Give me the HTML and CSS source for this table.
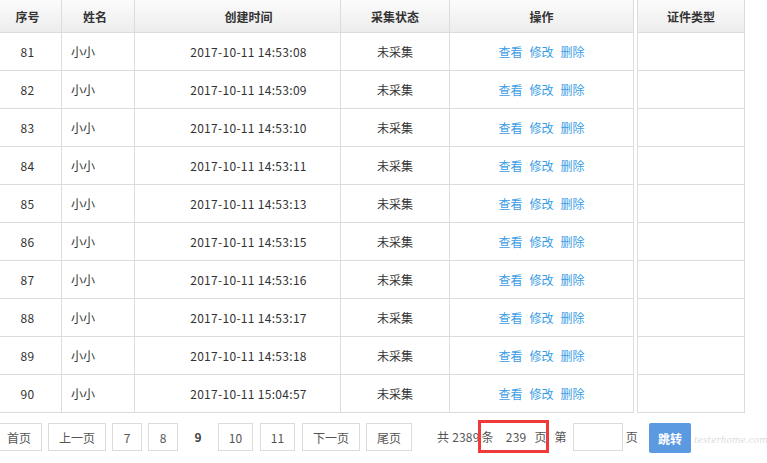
FILE: index.html
```html
<!DOCTYPE html>
<html lang="zh-CN">
<head>
<meta charset="utf-8">
<title>列表</title>
<link rel="stylesheet" href="styles.css">
</head>
<body>
<div class="tables">
  <div class="grid main">
    <div class="th c1">序号</div><div class="th c2">姓名</div><div class="th c3">创建时间</div><div class="th">采集状态</div><div class="th">操作</div>
    <div class="td c1 num">81</div><div class="td name">小小</div><div class="td c3 num">2017-10-11 14:53:08</div><div class="td">未采集</div><div class="td ops"><a>查看</a><a>修改</a><a>删除</a></div>
    <div class="td c1 num">82</div><div class="td name">小小</div><div class="td c3 num">2017-10-11 14:53:09</div><div class="td">未采集</div><div class="td ops"><a>查看</a><a>修改</a><a>删除</a></div>
    <div class="td c1 num">83</div><div class="td name">小小</div><div class="td c3 num">2017-10-11 14:53:10</div><div class="td">未采集</div><div class="td ops"><a>查看</a><a>修改</a><a>删除</a></div>
    <div class="td c1 num">84</div><div class="td name">小小</div><div class="td c3 num">2017-10-11 14:53:11</div><div class="td">未采集</div><div class="td ops"><a>查看</a><a>修改</a><a>删除</a></div>
    <div class="td c1 num">85</div><div class="td name">小小</div><div class="td c3 num">2017-10-11 14:53:13</div><div class="td">未采集</div><div class="td ops"><a>查看</a><a>修改</a><a>删除</a></div>
    <div class="td c1 num">86</div><div class="td name">小小</div><div class="td c3 num">2017-10-11 14:53:15</div><div class="td">未采集</div><div class="td ops"><a>查看</a><a>修改</a><a>删除</a></div>
    <div class="td c1 num">87</div><div class="td name">小小</div><div class="td c3 num">2017-10-11 14:53:16</div><div class="td">未采集</div><div class="td ops"><a>查看</a><a>修改</a><a>删除</a></div>
    <div class="td c1 num">88</div><div class="td name">小小</div><div class="td c3 num">2017-10-11 14:53:17</div><div class="td">未采集</div><div class="td ops"><a>查看</a><a>修改</a><a>删除</a></div>
    <div class="td c1 num">89</div><div class="td name">小小</div><div class="td c3 num">2017-10-11 14:53:18</div><div class="td">未采集</div><div class="td ops"><a>查看</a><a>修改</a><a>删除</a></div>
    <div class="td c1 num">90</div><div class="td name">小小</div><div class="td c3 num">2017-10-11 15:04:57</div><div class="td">未采集</div><div class="td ops"><a>查看</a><a>修改</a><a>删除</a></div>
  </div>
  <div class="grid fixed">
    <div class="th">证件类型</div>
    <div class="td"></div><div class="td"></div><div class="td"></div><div class="td"></div><div class="td"></div>
    <div class="td"></div><div class="td"></div><div class="td"></div><div class="td"></div><div class="td"></div>
  </div>
</div>
<div class="pager">
  <span class="btn first">首页</span>
  <span class="btn">上一页</span>
  <span class="btn num">7</span>
  <span class="btn num">8</span>
  <span class="cur">9</span>
  <span class="btn num2">10</span>
  <span class="btn num2">11</span>
  <span class="btn">下一页</span>
  <span class="btn">尾页</span>
  <span class="info total">共 2389</span>
  <span class="info tiao">条</span>
  <span class="info pages">239</span>
  <span class="info ye">页</span>
  <span class="info di">第</span>
  <span class="jump-input"></span>
  <span class="info ye2">页</span>
  <span class="go">跳转</span>
  <span class="mark"></span>
  <span class="watermark">testerhome.com</span>
</div>
</body>
</html>
```
FILE: styles.css
```css
html, body {
  margin: 0;
  padding: 0;
  background: #fff;
}
body {
  font-family: "Noto Sans CJK SC", "Microsoft YaHei", sans-serif;
  font-size: 12px;
  color: #333;
  width: 767px;
  height: 463px;
  overflow: hidden;
  position: relative;
}
.tables {
  display: flex;
  gap: 3px;
}
.grid {
  display: grid;
}
.main {
  grid-template-columns: 62px 73px 206px 109px 184px;
}
.fixed {
  grid-template-columns: 108px;
  border-left: 1px solid #dcdcdc;
}
.th, .td {
  box-sizing: border-box;
  border-right: 1px solid #dcdcdc;
  border-bottom: 1px solid #dcdcdc;
  display: flex;
  align-items: center;
  justify-content: center;
  white-space: nowrap;
}
.c1, .c2 {
  padding-right: 6px;
}
.c3 {
  padding-left: 22px;
}
.fixed .th, .fixed .td {
  width: 107px;
}
.th {
  height: 33px;
  font-weight: bold;
  color: #333;
  background: linear-gradient(#fbfbfb, #ededed);
}
.td {
  height: 38px;
}
.td.num {
  letter-spacing: 0.3px;
}
.td.name {
  justify-content: flex-start;
  padding-left: 9px;
}
.ops {
  gap: 7px;
}
.ops a {
  color: #3b9de5;
}
.pager {
  display: flex;
  align-items: flex-start;
  height: 30px;
  margin: 10px 0 0 -4px;
  color: #555;
  position: relative;
}
.btn {
  box-sizing: border-box;
  height: 28px;
  border: 1px solid #dcdcdc;
  display: flex;
  align-items: center;
  justify-content: center;
  padding: 0 10px;
  margin-right: 6px;
  background: #fff;
}
.btn.num { width: 30px; padding: 0; }
.btn.num2 { width: 35px; padding: 0; margin-right: 7px; }
.cur {
  width: 28px;
  height: 28px;
  line-height: 28px;
  margin-right: 6px;
  text-align: center;
  font-weight: bold;
  color: #444;
}
.info {
  white-space: pre;
  line-height: 28px;
  letter-spacing: 0.2px;
}
.total { margin-left: 19px; }
.tiao { margin-left: 2px; }
.pages { margin-left: 12px; }
.ye { margin-left: 8px; }
.di { margin-left: 8px; }
.jump-input {
  box-sizing: border-box;
  width: 50px;
  height: 28px;
  border: 1px solid #dcdcdc;
  margin-left: 6px;
}
.ye2 { margin-left: 3px; }
.go {
  margin-left: 11px;
  width: 42px;
  height: 30px;
  background: #5b9ae0;
  color: #fff;
  border-radius: 2px;
  display: flex;
  align-items: center;
  justify-content: center;
  font-weight: bold;
}
.mark {
  position: absolute;
  left: 482px;
  top: -3px;
  width: 65px;
  height: 27px;
  border: 3px solid #ee3a3a;
}
.watermark {
  position: absolute;
  left: 698px;
  top: 12px;
  font-family: "DejaVu Serif", serif;
  font-style: italic;
  font-size: 9px;
  color: rgba(170, 170, 170, 0.45);
}
```
